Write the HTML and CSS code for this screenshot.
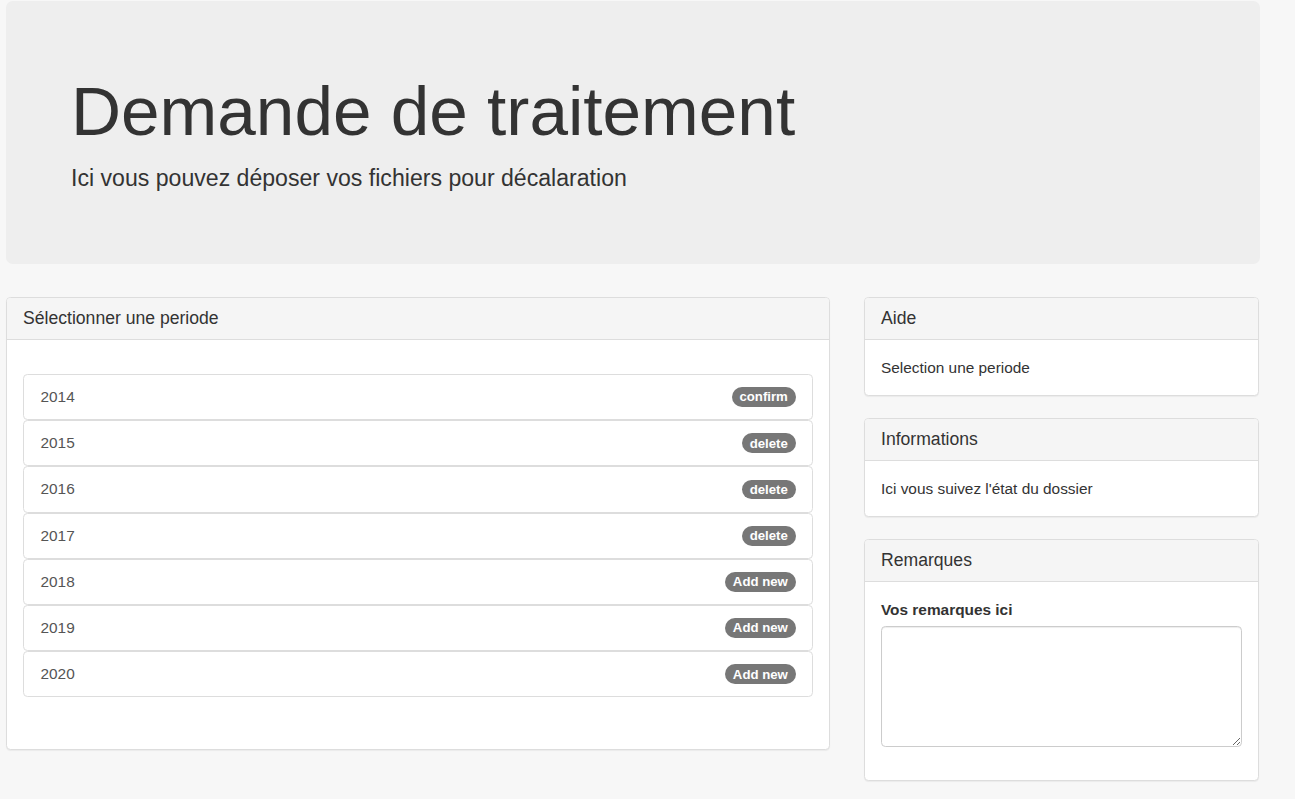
FILE: index.html
```html
<!DOCTYPE html>
<html lang="fr">
<head>
<meta charset="utf-8">
<title>Demande de traitement</title>
<link rel="stylesheet" href="styles.css">
</head>
<body>
<div class="page">
  <div class="jumbotron">
    <h1 class="jumbo-title">Demande de traitement</h1>
    <p class="jumbo-lead">Ici vous pouvez déposer vos fichiers pour décalaration</p>
  </div>
  <div class="row">
    <div class="col-main">
      <div class="panel">
        <div class="panel-heading"><h3 class="panel-title">Sélectionner une periode</h3></div>
        <div class="panel-body panel-body-list">
          <ul class="list-group">
            <li class="list-item"><span>2014</span><span class="badge">confirm</span></li>
            <li class="list-item"><span>2015</span><span class="badge">delete</span></li>
            <li class="list-item"><span>2016</span><span class="badge">delete</span></li>
            <li class="list-item"><span>2017</span><span class="badge">delete</span></li>
            <li class="list-item"><span>2018</span><span class="badge">Add new</span></li>
            <li class="list-item"><span>2019</span><span class="badge">Add new</span></li>
            <li class="list-item"><span>2020</span><span class="badge">Add new</span></li>
          </ul>
        </div>
      </div>
    </div>
    <div class="col-side">
      <div class="panel">
        <div class="panel-heading"><h3 class="panel-title">Aide</h3></div>
        <div class="panel-body">Selection une periode</div>
      </div>
      <div class="panel">
        <div class="panel-heading"><h3 class="panel-title">Informations</h3></div>
        <div class="panel-body">Ici vous suivez l'état du dossier</div>
      </div>
      <div class="panel">
        <div class="panel-heading"><h3 class="panel-title">Remarques</h3></div>
        <div class="panel-body">
          <div class="form-group">
            <label class="form-label" for="remarques">Vos remarques ici</label>
            <textarea class="form-control" id="remarques"></textarea>
          </div>
        </div>
      </div>
    </div>
  </div>
</div>
</body>
</html>
```

FILE: styles.css
```css
* {
  box-sizing: border-box;
}

html, body {
  margin: 0;
  padding: 0;
}

body {
  background: #f7f7f7;
  color: #333;
  font-family: "Liberation Sans", Arial, Helvetica, sans-serif;
  font-size: 15.4px;
  line-height: 22px;
}

.page {
  width: 1260px;
  padding: 1px 0 0 6px;
}

.jumbotron {
  background: #eeeeee;
  border-radius: 6.6px;
  height: 263px;
  padding: 72px 66px 0 65px;
}

.jumbo-title {
  margin: 0 0 13px 0;
  font-size: 69.3px;
  line-height: 76px;
  font-weight: 500;
  color: #333;
}

.jumbo-lead {
  margin: 0;
  font-size: 23.1px;
  line-height: 33px;
  font-weight: 400;
}

.row {
  display: grid;
  grid-template-columns: 824px 395px;
  column-gap: 34px;
  margin-top: 33px;
  align-items: start;
}

.panel {
  background: #fff;
  border: 1px solid #dddddd;
  border-radius: 4.4px;
  box-shadow: 0 1px 1px rgba(0, 0, 0, 0.05);
  margin-bottom: 22px;
}

.col-main .panel {
  margin-bottom: 0;
}

.panel-heading {
  background: #f5f5f5;
  border-bottom: 1px solid #dddddd;
  border-radius: 3.4px 3.4px 0 0;
  padding: 11px 16px;
  height: 42px;
}

.panel-title {
  margin: 0;
  font-size: 17.6px;
  line-height: 19.4px;
  font-weight: 500;
  color: #333;
}

.panel-body {
  padding: 16.5px 16px;
}

.panel-body-list {
  padding: 34px 16px 52px;
}

.list-group {
  list-style: none;
  margin: 0;
  padding: 0;
}

.list-item {
  display: flex;
  justify-content: space-between;
  align-items: center;
  border: 1px solid #dddddd;
  border-radius: 4.4px;
  padding: 11.1px 16.5px;
  line-height: 22px;
  color: #555;
  background: #fff;
}

.badge {
  display: inline-block;
  background: #777777;
  color: #fff;
  font-size: 13.2px;
  font-weight: 700;
  line-height: 13.2px;
  padding: 3.3px 7.7px;
  border-radius: 11px;
  white-space: nowrap;
}

.form-group {
  margin-bottom: 16.5px;
}

.form-label {
  display: inline-block;
  font-weight: 700;
  margin-bottom: 5.5px;
}

.form-control {
  display: block;
  width: 100%;
  height: 121px;
  padding: 6.6px 13.2px;
  border: 1px solid #cccccc;
  border-radius: 4.4px;
  box-shadow: inset 0 1px 1px rgba(0, 0, 0, 0.075);
  font-family: inherit;
  font-size: 15.4px;
  color: #555;
  background: #fff;
  resize: vertical;
}
```
